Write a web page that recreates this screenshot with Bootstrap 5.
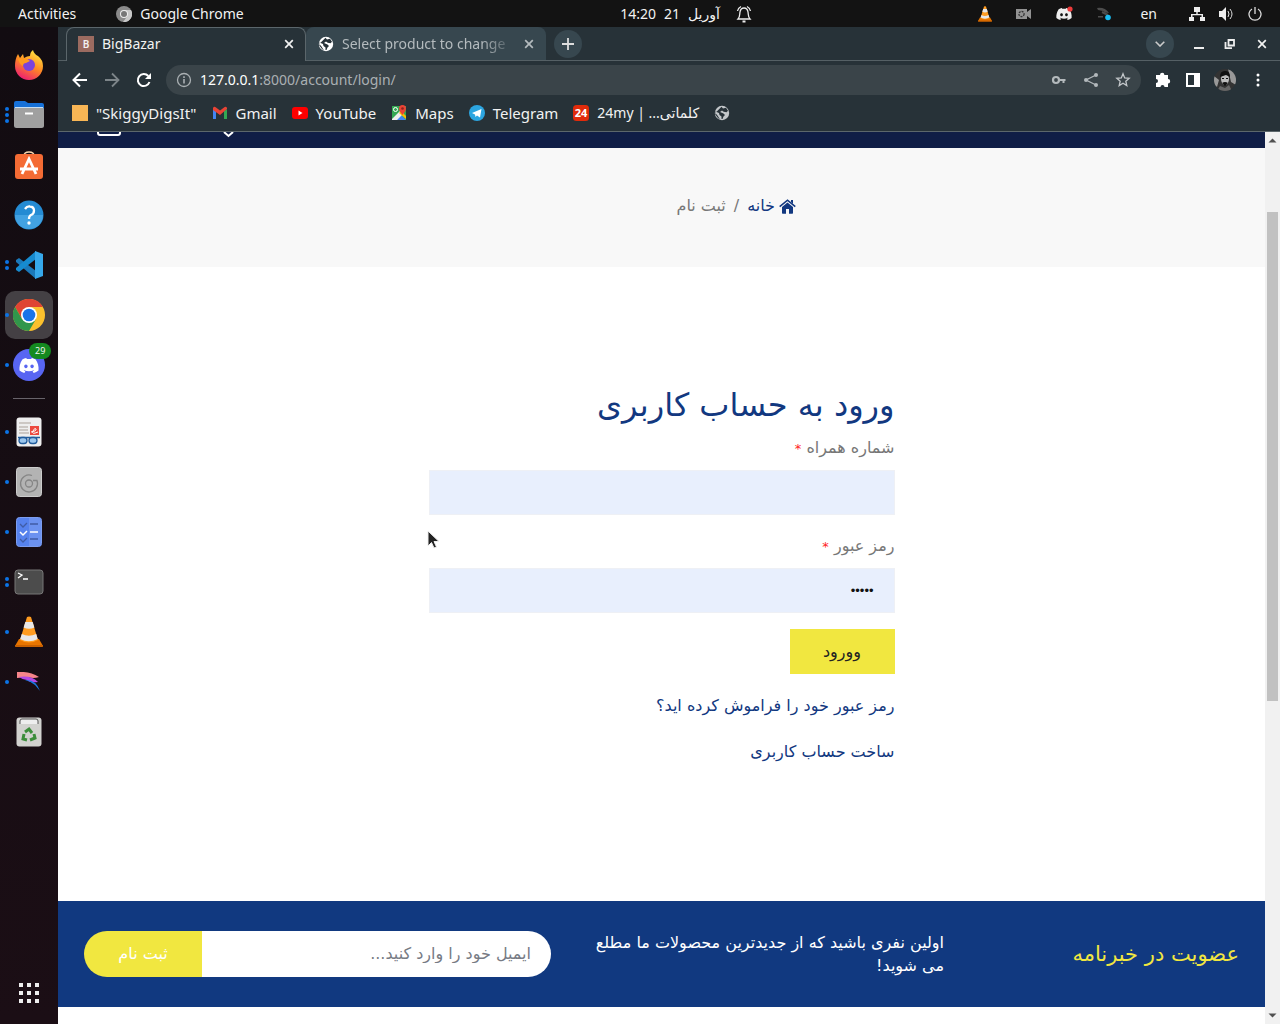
<!DOCTYPE html>
<html lang="en">
<head>
<meta charset="utf-8">
<meta name="viewport" content="width=device-width, initial-scale=1">
<title>BigBazar</title>
<link rel="stylesheet" href="https://cdn.jsdelivr.net/npm/bootstrap@5.3.0/dist/css/bootstrap.min.css">
<style>
  body { font-family: "Noto Sans", "DejaVu Sans", sans-serif; font-size: 14px; line-height: 20px; color: #f2f2f2; background: #150d12; }
  svg { display: block; flex: none; }
  button { padding: 0; border: 0; background: none; color: inherit; }
  a { color: inherit; text-decoration: none; }
  .sysbar { min-height: 27px; background: #131313; padding: 0 18px; }
  .sys-side { flex: 1 1 0; }
  .clock { margin-left: 92px; }
  .tray { gap: 14px; }
  .dock { width: 58px; flex: none; padding: 13px 0 6px; background: linear-gradient(#120c11, #1b0e15); }
  .slot { position: relative; width: 58px; height: 50px; display: flex; align-items: center; justify-content: center; }
  .slot.active::before { content: ""; position: absolute; inset: 1px 5px; border-radius: 10px; background: #444044; }
  .slot svg { position: relative; }
  .dots { position: absolute; left: 5px; top: 0; bottom: 0; display: flex; flex-direction: column; justify-content: center; gap: 2px; }
  .dots i { width: 4px; height: 4px; border-radius: 50%; background: #0b73e6; }
  .dock-rule { height: 1px; margin: 8px 13px; background: #68636a; }
  .count { position: absolute; left: 29px; top: 3px; padding: 0 6px; border-radius: 8px; background: #148a20; font-size: 9px; line-height: 16px; }
  .tabstrip { height: 34px; background: #273238; border-bottom: 1px solid #556065; padding-left: 8px; }
  .tab { height: 33px; width: 240px; padding: 0 12px; display: flex; align-items: center; gap: 8px; border-radius: 8px 8px 0 0; }
  .tab.on { height: 34px; background: #273238; border: 1px solid #5b666b; border-bottom: 0; padding: 0 11px 2px; }
  .tab.off { background: #37474f; color: #b4bbbe; }
  .tab-name { flex: 1; white-space: nowrap; text-align: left; }
  .tab.off .tab-name { -webkit-mask-image: linear-gradient(90deg, #000 80%, transparent); mask-image: linear-gradient(90deg, #000 80%, transparent); }
  .fav { width: 16px; height: 16px; background: #9b6b60; font-size: 10px; line-height: 16px; text-align: center; font-weight: 600; }
  .round { width: 28px; height: 28px; border-radius: 50%; background: #37474f; display: flex; align-items: center; justify-content: center; }
  .toolbar { background: #273238; padding: 4px 14px; }
  .nav-tools { gap: 16px; margin-right: 14px; }
  .ext-tools { gap: 14px; margin-left: 15px; }
  .omni { background: #3a4449; height: 30px; border-radius: 15px; padding: 0 10px; }
  .omni b { font-weight: 400; color: #fff; }
  .omni span { color: #aab0b3; }
  .bookmarks { background: #273238; padding: 4px 14px 8px; gap: 15px; border-bottom: 1px solid #5c676b; font-size: 15px; }
  .bookmarks a { display: flex; align-items: center; gap: 8px; white-space: nowrap; }
  .bookmarks a.narrow { font-size: 14px; }
  .site { background: #fff; font-family: "DejaVu Sans", sans-serif; font-size: 16px; line-height: 24px; color: #777; }
  .navy-strip { height: 16px; background: #101e46; overflow: hidden; padding-left: 38px; }
  .crumbs { background: #f8f8f8; padding: 46px 0 49px; }
  .crumb-box { width: 269px; margin: 0 auto; gap: 8px; }
  .blue { color: #123880; }
  .login { width: 100%; max-width: 466px; margin: 0 auto; padding: 118px 0 136px; }
  .login h1 { font-size: 32px; line-height: 40px; margin: 0 0 12px; font-weight: 400; }
  .login label { display: block; line-height: 22px; margin-bottom: 10px; }
  .req { color: #f22; font-size: 13px; }
  .field { display: block; width: 100%; height: 45px; border: 1px solid #eef0f5; background: #e8effd; padding: 0 20px; color: #111; outline: 0; }
  .field.secret { font: 13px "Liberation Sans", sans-serif; }
  .enter { background: #f1e740; color: #222; height: 45px; width: 105px; }
  .signup { margin-top: 22px; }
  .news { background: #113980; padding: 30px 26px; margin-bottom: 17px; color: #fff; }
  .news-title { color: #f1e740; font-size: 21px; }
  .news-text { width: 358px; line-height: 23px; }
  .news-form { width: 467px; height: 46px; margin-right: 35px; border-radius: 23px; overflow: hidden; }
  .news-form input { flex: 1; min-width: 0; border: 0; background: #fff; padding: 0 20px; outline: 0; }
  .news-form input::placeholder { color: #777b84; opacity: 1; }
  .news-form button { width: 118px; background: #f1e740; color: #fff; }
  .scroll { width: 15px; flex: none; background: #f1f1f1; }
  .scroll-gap-top { flex: 63; }
  .scroll-thumb { width: 11px; flex: 0 0 489px; background: #c1c1c1; }
  .scroll-gap-end { flex: 306; }
  .pointer { position: absolute; left: 427px; top: 530px; }
</style>
<script src="https://cdn.jsdelivr.net/npm/bootstrap@5.3.0/dist/js/bootstrap.bundle.min.js"></script>
</head>
<body class="d-flex flex-column min-vh-100">
<svg width="0" height="0" class="position-absolute">
  <defs>
    <symbol id="cone" viewBox="0 0 28 32"><path fill="#e87500" d="M4 23h20l4 7q0 1-2 1H2q-2 0-2-1z"/><path fill="#ff9c20" d="M12 1q2-1 4 0l7 23q-9 5-18 0z"/><path fill="#e8e8e8" d="M10.300 6h7.400l1.700 5.500q-5.400 2.500-10.800 0zM6.800 18q7 3.500 14.400 0l1.500 5q-9 4.500-17.500 0z"/><path fill="#c86000" d="M0 29h28v1q0 1-2 1H2q-2 0-2-1z"/></symbol>
    <symbol id="clyde" viewBox="0 0 24 18"><path fill="currentColor" d="M20 1.700A19 19 0 0 0 15.300 0l-.7 1.300a18 18 0 0 0-5.200 0L8.700 0A19 19 0 0 0 4 1.700C1 6 .2 10.500.6 15a19 19 0 0 0 5.800 3l1.300-2-2-1 .5-.4a13.500 13.500 0 0 0 11.600 0l.5.4-2 1 1.300 2a19 19 0 0 0 5.800-3c.5-5.300-.8-9.700-3.400-13.300zM8.300 12.300c-1.200 0-2.100-1-2.100-2.300s.9-2.300 2.100-2.300 2.100 1 2.100 2.300-.9 2.300-2.100 2.300zm7.400 0c-1.200 0-2.100-1-2.100-2.300s.9-2.300 2.100-2.300 2.100 1 2.100 2.300-.9 2.300-2.100 2.300z"/></symbol>
    <symbol id="globe" viewBox="0 0 16 16"><circle cx="8" cy="8" r="7.200" fill="currentColor"/><path fill="#273238" d="M7.500 1.800 9 3.500l3-.8 2 3-1.500 1.600-2.800-.6L8 5.500 6 7l3.500 1.500L11 10l-1.500 1.500L8.500 14h-1V11.500L5.500 10 5 8 1.500 6.500l-.2 3L4 13l2 1.500-2.500-4L1.300 8z"/></symbol>
    <symbol id="cross" viewBox="0 0 10 10"><path d="m1.200 1.200 7.600 7.600m0-7.600L1.200 8.800" stroke="currentColor" stroke-width="1.700"/></symbol>
  </defs>
</svg>

<header class="sysbar d-flex align-items-center">
  <div class="sys-side d-flex align-items-center">
    <button type="button">Activities</button>
    <button type="button" class="d-flex align-items-center gap-2 ps-4 ms-3"><svg width="16" height="16" viewBox="0 0 16 16"><circle cx="8" cy="8" r="8" fill="#8b8b8b"/><path fill="#c8c8c8" d="M8 4h7a8 8 0 0 1-8 12l4.500-6z"/><circle cx="8" cy="8" r="4" fill="#eee"/><circle cx="8" cy="8" r="3" fill="#777"/></svg><span class="text-nowrap">Google Chrome</span></button>
  </div>
  <div class="clock d-flex align-items-center gap-2"><span>14:20</span><span>21</span><span lang="fa">آوریل</span>
    <svg class="ms-2" width="16" height="18" viewBox="0 0 16 18" fill="none" stroke="#eee" stroke-width="1.300"><path d="M2 14c2-2 1.500-4 2-7 .4-2.500 2-4 4-4s3.600 1.500 4 4c.5 3 0 5 2 7zM5 1.500Q2 3 1.500 6M11 1.500q3 1.500 3.500 4.500"/><path d="M6.500 16.500h3" stroke-width="2"/></svg></div>
  <div class="sys-side d-flex align-items-center justify-content-end">
    <svg width="14" height="16"><use href="#cone"/></svg>
    <svg class="ms-4" width="16" height="12" viewBox="0 0 16 12"><path fill="#929292" d="M0 1h11v3l4-3v10l-4-3v3H0z"/><circle cx="5.500" cy="6" r="2.600" fill="#929292" stroke="#333" stroke-width="1.300" stroke-dasharray="2 1"/></svg>
    <svg class="ms-4" width="17" height="15" viewBox="0 0 17 15" color="#eee"><use href="#clyde" y="2" width="16" height="12"/><circle cx="14" cy="3" r="2.600" fill="#ee3b3b"/></svg>
    <svg class="ms-4" width="15" height="14" viewBox="0 0 15 14"><path fill="#4c4c4c" d="M0 1q8-1 12 5L8 5.500 6 4 1 3zM1 9h5v1.500H1z"/><path d="m5 5 6 3" stroke="#4c4c4c" stroke-width="2"/><circle cx="11" cy="10.500" r="2.800" fill="#18bdf2"/></svg>
    <button type="button" class="mx-4 ps-1 pe-2">en</button>
    <div class="tray d-flex align-items-center">
      <svg width="16" height="14" viewBox="0 0 16 14" fill="#eee"><path d="M5 0h6v5H8.700v2H14v3h2v4h-5v-4h1.500V8.300h-9V10H5v4H0v-4h2V7h5.300V5H5z"/></svg>
      <svg width="15" height="14" viewBox="0 0 15 14"><path fill="#eee" d="M0 4h3l4-4v14l-4-4H0z"/><path fill="none" stroke="#ddd" d="M9 4q2 3 0 6m2-8q4 5 0 10"/></svg>
      <svg width="14" height="14" viewBox="0 0 14 14" fill="none" stroke="#ddd" stroke-width="1.300"><path d="M4 2a6 6 0 1 0 6 0M7 0v7"/></svg>
    </div>
  </div>
</header>

<div class="d-flex flex-grow-1">
  <nav class="dock d-flex flex-column" aria-label="Dock">
    <a href="#" class="slot" aria-label="Firefox"><svg width="30" height="30" viewBox="0 0 30 30"><defs><linearGradient id="ff" x1=".8" y1="0" x2=".3" y2="1"><stop stop-color="#ffef45"/><stop offset=".5" stop-color="#ff8b22"/><stop offset="1" stop-color="#ed1c74"/></linearGradient></defs><path fill="url(#ff)" d="M16 6q0-4 3-6 1 4 5 6 5 4 5 10a14 14 0 0 1-28 0Q1 9 4 4l2 4 3-4 1 4q3-2 6-2z"/><circle cx="15" cy="15" r="6" fill="#7b42db"/><path fill="#ff9a1f" d="m4 9 8-1 4 3-4 2q-3 0-3 3-3-1-5-7z"/></svg></a>
    <a href="#" class="slot" aria-label="Files"><span class="dots"><i></i><i></i><i></i></span><svg width="32" height="28" viewBox="0 0 32 28"><path fill="#1671d9" d="M1 2q0-2 2-2h9l3 2h14q2 0 2 2v9H1z"/><rect x="1" y="6" width="30" height="21" rx="2.500" fill="#a0a0a0"/><path stroke="#c6dff5" d="M2 6.500h28"/><path d="M12 12.500h8" stroke="#fff" stroke-width="2"/></svg></a>
    <a href="#" class="slot" aria-label="Software"><svg width="30" height="30" viewBox="0 0 30 30"><path d="M10 6q0-4 5-4t5 4" fill="none" stroke="#f5d6ae" stroke-width="1.500"/><rect x="1" y="4" width="28" height="25" rx="3" fill="#f46b34"/><path d="m8 24 7-15 7 15M6 19h18" fill="none" stroke="#fff" stroke-width="2.800"/></svg></a>
    <a href="#" class="slot" aria-label="Help"><svg width="30" height="30" viewBox="0 0 30 30"><circle cx="15" cy="15" r="14.500" fill="#248bd3"/><path d="M1 15a14 14 0 0 0 28 0z" fill="#42a2e2"/><path d="M11 9q2-3 5-2.500 4 .5 4 4t-3 4.500q-2 1-2 4" fill="none" stroke="#fff" stroke-width="2.300"/><circle cx="15" cy="23" r="1.700" fill="#fff"/></svg></a>
    <a href="#" class="slot" aria-label="Code"><span class="dots"><i></i><i></i></span><svg width="30" height="30" viewBox="0 0 30 30"><path d="m2 10 3-2 17 13v8L2 12z" fill="#1b79ba"/><path d="m2 20 3 2L22 9V1L2 18z" fill="#168bd0"/><path d="m21 1 8 3v22l-8 3z" fill="#36a8eb"/></svg></a>
    <a href="#" class="slot active" aria-label="Chrome"><span class="dots"><i></i></span><svg width="32" height="32" viewBox="0 0 32 32"><circle cx="16" cy="16" r="16" fill="#fbc02d"/><path d="M2.100 8A16 16 0 0 1 29.900 8H16L9 20z" fill="#df4433"/><path d="M2.100 8 9 20l7 4 7-4-7 12A16 16 0 0 1 2.100 8z" fill="#31964b"/><circle cx="16" cy="16" r="8" fill="#fff"/><circle cx="16" cy="16" r="6.300" fill="#1a73e8"/></svg></a>
    <a href="#" class="slot" aria-label="Discord"><span class="dots"><i></i></span><svg width="32" height="32" viewBox="0 0 32 32" color="#fff"><circle cx="16" cy="16" r="16" fill="#5865f2"/><use href="#clyde" x="6" y="9" width="20" height="15"/></svg><span class="count">29</span></a>
    <div class="dock-rule"></div>
    <a href="#" class="slot" aria-label="Document viewer"><span class="dots"><i></i></span><svg width="26" height="30" viewBox="0 0 26 30"><rect x=".5" y=".5" width="25" height="29" rx="3" fill="#eee"/><path d="M3 6h12M3 10h9M3 13h9M3 16h10" stroke="#aaa199"/><path fill="#ec493f" d="M14 9h9v9h-9z"/><path d="M15 15q6-1 5-3t-3 2 5 1" stroke="#fff" fill="none"/><path d="M2 20.500h22" stroke="#225c9c" stroke-width="1.500"/><rect x="3" y="20.500" width="8" height="6" rx="3" fill="#9bc6ed" stroke="#225c9c" stroke-width="1.300"/><rect x="13" y="20.500" width="8" height="6" rx="3" fill="#9bc6ed" stroke="#225c9c" stroke-width="1.300"/></svg></a>
    <a href="#" class="slot" aria-label="Disks"><span class="dots"><i></i></span><svg width="26" height="30" viewBox="0 0 26 30"><rect x=".5" y=".5" width="25" height="29" rx="3" fill="#b3b3b3" stroke="#ccc"/><path d="M16 8.500a8.500 8.500 0 1 0 5 5h-4" fill="none" stroke="#858585" stroke-width="1.300"/><circle cx="13" cy="16.500" r="3.500" fill="none" stroke="#858585" stroke-width="1.300"/></svg></a>
    <a href="#" class="slot" aria-label="Tasks"><span class="dots"><i></i></span><svg width="26" height="30" viewBox="0 0 26 30"><rect x=".5" y=".5" width="25" height="29" rx="3" fill="#5682ed" stroke="#7c9df0"/><path d="M13 1h12v28H13z" fill="#6c92f0"/><path d="m4 7 3 3 4-4M14 7h8M4 22l3 3 4-4m3 1h8" stroke="#405ca5" fill="none" stroke-width="1.300"/><path d="m4 15 3 3 4-4m3 1h8" stroke="#fff" fill="none" stroke-width="1.500"/></svg></a>
    <a href="#" class="slot" aria-label="Terminal"><span class="dots"><i></i><i></i></span><svg width="30" height="26" viewBox="0 0 30 26"><rect x="1" y="1" width="28" height="24" rx="3" fill="#4c4c4c" stroke="#777"/><path d="m4 4 4 2-4 3m5 1h5" stroke="#fff" fill="none" stroke-width="1.300"/></svg></a>
    <a href="#" class="slot" aria-label="VLC"><span class="dots"><i></i></span><svg width="28" height="32"><use href="#cone"/></svg></a>
    <a href="#" class="slot" aria-label="Kdenlive"><span class="dots"><i></i></span><svg width="26" height="20" viewBox="0 0 26 20"><path d="M1 0q12-1 22 5-6 2-11 0L1 6z" fill="#f6858a"/><path d="M3 5q12-2 19 5-8 1-11-2-4 0-8-3z" fill="#b14ae6"/><path d="M9 8q11-1 15 11l-5-6q-5-4-10-5z" fill="#1878df"/></svg></a>
    <a href="#" class="slot" aria-label="Trash"><svg width="26" height="30" viewBox="0 0 26 30"><rect x=".5" y=".5" width="25" height="29" rx="3" fill="#d2d2cf"/><path d="M4 7V4q0-2 2-2h14q2 0 2 2v3" fill="#eee" stroke="#555"/><path d="m9 15 4-3 3 4m2 1 1 4-5 2m-3 0-4-1 1-5" fill="none" stroke="#3c8d3b" stroke-width="3"/></svg></a>
    <a href="#" class="slot mt-auto" aria-label="Show applications"><svg width="20" height="20" viewBox="0 0 20 20" fill="#eee"><path d="M0 0h4v4H0zM8 0h4v4H8zM16 0h4v4h-4zM0 8h4v4H0zM8 8h4v4H8zM16 8h4v4h-4zM0 16h4v4H0zM8 16h4v4H8zM16 16h4v4h-4z"/></svg></a>
  </nav>

  <div class="d-flex flex-column flex-grow-1">
    <div class="tabstrip d-flex">
      <button type="button" class="tab on"><span class="fav">B</span><span class="tab-name">BigBazar</span><svg width="10" height="10"><use href="#cross"/></svg></button>
      <button type="button" class="tab off"><svg width="16" height="16" color="#fff"><use href="#globe"/></svg><span class="tab-name">Select product to change</span><svg width="10" height="10"><use href="#cross"/></svg></button>
      <div class="d-flex align-items-center ps-2"><button type="button" class="round" aria-label="New tab"><svg width="12" height="12" viewBox="0 0 12 12"><path d="M6 0v12M0 6h12" stroke="#ddd" stroke-width="1.800"/></svg></button></div>
      <div class="ms-auto d-flex align-items-center pe-2 me-1">
        <button type="button" class="round" aria-label="Search tabs"><svg width="10" height="6" viewBox="0 0 10 6"><path d="m.7.700 4.300 4.300L9.300.700" fill="none" stroke="#ccc" stroke-width="1.600"/></svg></button>
        <button type="button" class="ms-3 ps-1" aria-label="Minimize"><svg width="10" height="10" viewBox="0 0 10 10"><path d="M0 9h10" stroke="#eee" stroke-width="2"/></svg></button>
        <button type="button" class="mx-3 px-1" aria-label="Restore"><svg width="12" height="10" viewBox="0 0 12 10" fill="none" stroke="#eee" stroke-width="1.800"><path d="M4.500 1h5.500v5.500H4.500zM1.500 3v6.100H8"/></svg></button>
        <button type="button" aria-label="Close"><svg width="12" height="10"><use href="#cross"/></svg></button>
      </div>
    </div>
    <div class="toolbar d-flex align-items-center">
      <div class="nav-tools d-flex">
        <svg width="16" height="16" viewBox="0 0 16 16" fill="none" stroke="#fff" stroke-width="2"><path d="M15 8H2m6-6.500L1.500 8 8 14.500"/></svg>
        <svg width="16" height="16" viewBox="0 0 16 16" fill="none" stroke="#7d8589" stroke-width="1.800"><path d="M1 8h13M8 1.500 14.500 8 8 14.500"/></svg>
        <svg width="16" height="16" viewBox="0 0 16 16" fill="none" stroke="#fff" stroke-width="2"><path d="M13.500 10A6 6 0 1 1 12.300 4"/><path fill="#fff" stroke="none" d="M15 1v6H9z"/></svg>
      </div>
      <div class="omni d-flex align-items-center flex-grow-1 gap-2">
        <svg width="16" height="16" viewBox="0 0 16 16"><circle cx="8" cy="8" r="6.500" fill="none" stroke="#aab0b3" stroke-width="1.300"/><path d="M8 7v4.500M8 4.300V6" stroke="#aab0b3" stroke-width="1.600"/></svg>
        <span class="flex-grow-1"><b>127.0.0.1</b>:8000/account/login/</span>
        <svg width="16" height="16" viewBox="0 0 16 16"><path fill="none" stroke="#b3b9bc" stroke-width="2" d="M8 8h6.500M12.500 8v3"/><circle cx="5" cy="8" r="3" fill="none" stroke="#b3b9bc" stroke-width="2.200"/></svg>
        <svg class="mx-2" width="16" height="16" viewBox="0 0 16 16"><path fill="none" stroke="#b3b9bc" stroke-width="1.300" d="M13 3 3 8l10 5"/><g fill="#b3b9bc"><circle cx="13" cy="3" r="2"/><circle cx="3" cy="8" r="2"/><circle cx="13" cy="13" r="2"/></g></svg>
        <svg width="16" height="16" viewBox="0 0 16 16"><path fill="none" stroke="#c3c7ca" stroke-width="1.300" d="m8 1.800 1.700 4.100 4.500.4-3.400 2.900 1 4.400L8 11.300l-3.800 2.300 1-4.400-3.400-2.900 4.500-.4z"/></svg>
      </div>
      <div class="ext-tools d-flex align-items-center">
        <svg width="15" height="16" viewBox="0 0 15 16"><path fill="#fff" d="M0 3h4a2.200 2.200 0 0 1 4.400 0H12v4a2.200 2.200 0 0 1 0 4.400V15H8.500a2 2 0 0 0-4 0H0v-4a2 2 0 0 0 0-4z"/></svg>
        <svg width="15" height="14" viewBox="0 0 15 14"><path fill="#fff" fill-rule="evenodd" d="M1 0h14v14H1zM3 2v10h6V2z"/></svg>
        <svg width="22" height="22" viewBox="0 0 22 22"><defs><clipPath id="av"><circle cx="11" cy="11" r="11"/></clipPath></defs><g clip-path="url(#av)"><path fill="#333" d="M0 0h22v22H0z"/><path fill="#999" d="m14 0 8 3v13l-5-3zM0 7l5 4-2 7-3-2z"/><ellipse cx="11" cy="10" rx="4" ry="6" fill="#bbb"/><path fill="#111" d="M6 8q0-7 6-6 4 0 4 6l-4-2zM8 9h2v1H8zm4 0h2v1h-2zM8 14q3-2 6 0l-3 3z"/><path fill="#666" d="m6 17 5 2 4-3 3 6H3z"/></g></svg>
        <svg width="16" height="14" viewBox="0 0 16 14" fill="#fff"><circle cx="8" cy="2" r="1.500"/><circle cx="8" cy="7" r="1.500"/><circle cx="8" cy="12" r="1.500"/></svg>
      </div>
    </div>
    <nav class="bookmarks d-flex" aria-label="Bookmarks">
      <a href="#"><svg width="16" height="16"><path fill="#f8b655" d="M0 0h16v16H0z"/></svg>"SkiggyDigsIt"</a>
      <a href="#"><svg width="16" height="16" viewBox="0 0 16 16"><path fill="#4285f4" d="M1 4l3 2v8H1z"/><path fill="#34a853" d="M12 6l3-2v10h-3z"/><path fill="#ea4335" d="M1 3q1-2 3-.500l4 3 4-3Q14 1 15 3v1L8 10 1 5z"/></svg>Gmail</a>
      <a href="#"><svg width="16" height="16" viewBox="0 0 16 16"><rect y="2" width="16" height="12" rx="3" fill="#f00"/><path fill="#fff" d="m6.500 5.500 4 2.500-4 2.500z"/></svg>YouTube</a>
      <a href="#"><svg width="16" height="16" viewBox="0 0 16 16"><path fill="#34a853" d="M1 1h14v14H1z"/><path fill="#4285f4" d="m8 8 7 7H4z"/><path fill="#eee" d="m1 14 9-9 3 3-7 7H1z"/><path fill="#fbbc04" d="m8 8 7 6v-3L10 6z"/><circle cx="4.500" cy="4.500" r="2" fill="none" stroke="#fff"/><path fill="#ea4335" d="M8 3.500a3.500 3.500 0 0 1 7 0Q15 6 11.500 10 8 6 8 3.500z"/><circle cx="11.500" cy="3.500" r="1.300" fill="#8d241d"/></svg>Maps</a>
      <a href="#"><svg width="16" height="16" viewBox="0 0 16 16"><circle cx="8" cy="8" r="8" fill="#2ca5e0"/><path fill="#fff" d="m3 8 9.500-4-1.500 8.500-3-2-1.500 1.500-.5-2.500z"/></svg>Telegram</a>
      <a href="#" class="narrow"><svg width="16" height="16" viewBox="0 0 16 16"><rect width="16" height="16" rx="3.500" fill="#e12b0b"/><text x="8" y="12" text-anchor="middle" fill="#fff" font-size="11" font-weight="700">24</text></svg><span>24my | <bdi dir="rtl" lang="fa">کلماتی...</bdi></span></a>
      <a href="#" aria-label="Website"><svg width="16" height="16" color="#c3c7ca"><use href="#globe"/></svg></a>
    </nav>

    <div class="d-flex flex-grow-1">
      <main class="site d-flex flex-column flex-grow-1" lang="fa">
        <div class="navy-strip d-flex">
          <svg width="26" height="6" viewBox="0 0 26 6"><path d="M2 0v1q0 2 2 2h18q2 0 2-2V0" fill="none" stroke="#fff" stroke-width="2"/></svg>
          <svg class="ms-5 me-5" width="120" height="6" viewBox="0 0 120 6"><path d="m54 0 4.500 4L63 0" fill="none" stroke="#fff" stroke-width="2"/></svg>
        </div>
        <div class="crumbs" dir="rtl">
          <nav class="crumb-box d-flex" aria-label="Breadcrumb">
            <a href="#" class="blue d-flex align-items-center gap-1"><svg width="17" height="15" viewBox="0 0 17 15"><path fill="#123880" d="M8.500 3.500 14 8v6q0 .7-.7.7H10V10H7v4.700H3.700Q3 14.700 3 14V8z"/><path fill="none" stroke="#123880" stroke-width="1.600" d="m.7 7.700 7.800-6.500 7.800 6.500"/><path fill="#123880" d="M12 1h2v4l-2-2z"/></svg>خانه</a>
            <span>/</span><span>ثبت نام</span>
          </nav>
        </div>
        <div class="flex-grow-1 d-flex px-3">
          <form class="login" dir="rtl">
            <h1 class="blue">ورود به حساب کاربری</h1>
            <label for="phone">شماره همراه <span class="req">*</span></label>
            <input id="phone" class="field" type="tel">
            <label for="secret" class="mt-3 pt-1">رمز عبور <span class="req">*</span></label>
            <input id="secret" class="field secret" type="password" value="bazar">
            <button type="button" class="enter mt-3">وورود</button>
            <div class="blue mt-3 pt-1"><a href="#">رمز عبور خود را فراموش کرده اید؟</a></div>
            <div class="blue signup"><a href="#">ساخت حساب کاربری</a></div>
          </form>
        </div>
        <section class="news d-flex align-items-center" dir="rtl">
          <div class="news-title flex-grow-1">عضویت در خبرنامه</div>
          <div class="news-text">اولین نفری باشید که از جدیدترین محصولات ما مطلع می شوید!</div>
          <form class="news-form d-flex"><input type="email" aria-label="ایمیل" placeholder="ایمیل خود را وارد کنید..."><button type="button">ثبت نام</button></form>
        </section>
      </main>
      <div class="scroll d-flex flex-column align-items-center" aria-hidden="true">
        <svg width="15" height="17" viewBox="0 0 15 17"><path fill="#505050" d="m3.500 10.500 4-4 4 4z"/></svg>
        <span class="scroll-gap-top"></span><div class="scroll-thumb"></div><span class="scroll-gap-end"></span>
        <svg width="15" height="17" viewBox="0 0 15 17"><path fill="#505050" d="m3.500 6.500 4 4 4-4z"/></svg>
      </div>
    </div>
  </div>
</div>
<svg class="pointer" width="14" height="20" viewBox="0 0 14 20"><path d="M1 1v15l3.500-3.500L7 18l2.500-1-2.500-5.500h5z" fill="#222" stroke="#eee"/></svg>
</body>
</html>
